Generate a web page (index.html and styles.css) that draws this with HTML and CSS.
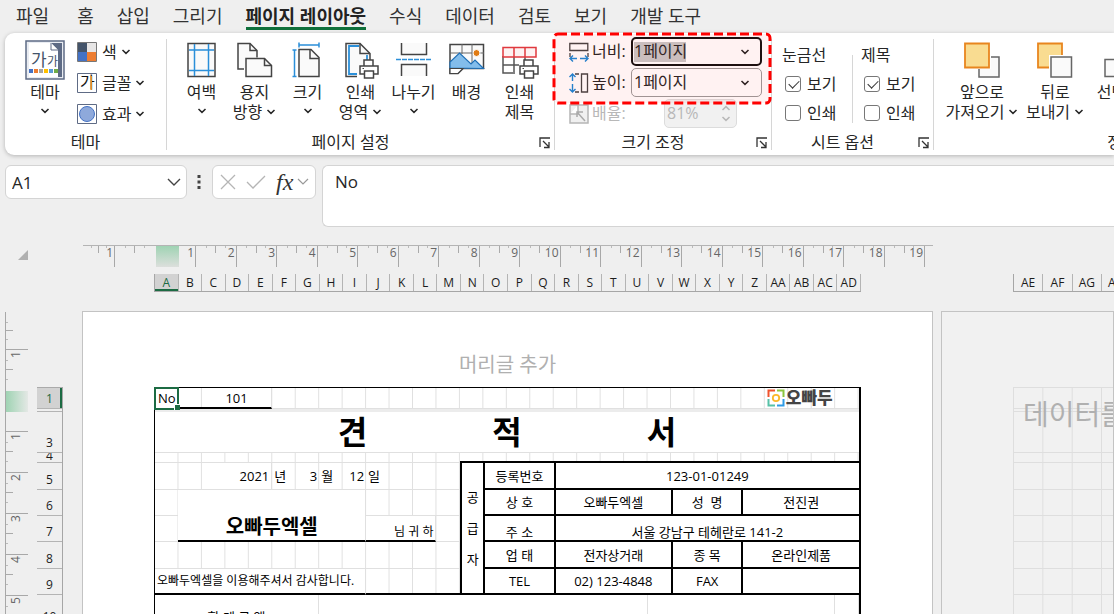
FILE: index.html
```html
<!DOCTYPE html>
<html lang="ko">
<head>
<meta charset="utf-8">
<title>견적서</title>
<link rel="stylesheet" href="styles.css">
</head>
<body>
<svg class="defs" aria-hidden="true">
  <symbol id="chev" viewBox="0 0 10 6"><path d="M1.500 1l3.500 3.400L8.500 1" fill="none" stroke="currentColor" stroke-width="1.500"/></symbol>
  <symbol id="launch" viewBox="0 0 12 12"><path d="M1 10V1h10M4 4l6 6M10 5v5.500H5" fill="none" stroke="#333" stroke-width="1.300"/></symbol>
  <symbol id="printer" viewBox="0 0 20 20"><path d="M5 7V1h9v6M5 15H1V7h18v8h-4" fill="#fff" stroke="#444" stroke-width="1.500"/><path d="M5.500 12h9v7h-9z" fill="#fff" stroke="#444" stroke-width="1.500"/><path d="M3.500 9.500h1.500" stroke="#444"/></symbol>
</svg>

<nav class="tabs">
  <button class="tab">파일</button>
  <button class="tab">홈</button>
  <button class="tab">삽입</button>
  <button class="tab">그리기</button>
  <button class="tab active">페이지 레이아웃</button>
  <button class="tab">수식</button>
  <button class="tab">데이터</button>
  <button class="tab">검토</button>
  <button class="tab">보기</button>
  <button class="tab">개발 도구</button>
</nav>

<section class="ribbon">
  <div class="group g-theme">
    <div class="tools">
      <button class="big theme">
        <svg class="ico" width="40" height="40" viewBox="0 0 40 40"><rect x="1" y="1" width="38" height="38" fill="#e9ecf2" stroke="#5e6b85" stroke-width="1.500"/><rect x="4" y="3" width="29" height="34" fill="#fff"/><path d="M26 3h11v34h-4V10z" fill="#5e6b85"/><path d="M26 3v7h7" fill="#fff" stroke="#5e6b85"/><text x="6" y="26" font-size="17" fill="#44546a">가</text><text x="22" y="26" font-size="12" fill="#44546a">가</text><path d="M4 29h4v4H4z" fill="#4472c4"/><path d="M9 29h4v4H9z" fill="#ed7d31"/><path d="M14 29h4v4h-4z" fill="#a5a5a5"/><path d="M19 29h4v4h-4z" fill="#ffc000"/><path d="M24 29h4v4h-4z" fill="#5b9bd5"/><path d="M29 29h4v4h-4z" fill="#70ad47"/></svg>
        <span>테마</span><svg class="chev"><use href="#chev"/></svg>
      </button>
      <div class="stack">
        <button class="small"><svg width="20" height="20"><path d="M1 1h9v9H1z" fill="#44546a"/><path d="M10 1h9v9h-9z" fill="#e7e6e6"/><path d="M1 10h9v9H1z" fill="#4472c4"/><path d="M10 10h9v9h-9z" fill="#ed7d31"/><path d="M.5.5h19v19H.5z" fill="none" stroke="#777"/></svg><span>색</span><svg class="chev"><use href="#chev"/></svg></button>
        <button class="small"><svg width="20" height="20"><path d="M.5.5h19v19H.5z" fill="#fff" stroke="#5e6b85"/><text x="3" y="15" font-size="16" fill="#111">가</text><path d="M14.500 3v14" stroke="#e08a2a"/></svg><span>글꼴</span><svg class="chev"><use href="#chev"/></svg></button>
        <button class="small"><svg width="20" height="20"><path d="M.5.5h19v19H.5z" fill="#fff" stroke="#5e6b85"/><circle cx="10" cy="10" r="7.500" fill="#8ea9db" stroke="#4472c4"/></svg><span>효과</span><svg class="chev"><use href="#chev"/></svg></button>
      </div>
    </div>
    <div class="caption"><span>테마</span></div>
  </div>

  <div class="group g-setup">
    <div class="tools">
      <button class="big"><svg class="ico" width="36" height="40" viewBox="0 0 36 40"><path d="M4 3.500h27v33H4z" fill="#fafafa" stroke="#444" stroke-width="1.500"/><path d="M10.500 4v32M24.500 4v32M5 10h25M5 30.500h25" stroke="#2b8fd9" stroke-width="1.500"/></svg><span>여백</span><svg class="chev"><use href="#chev"/></svg></button>
      <button class="big"><svg class="ico" width="36" height="40" viewBox="0 0 36 40"><path d="M7 29H1V3.500h12l7 7v7" fill="#fafafa" stroke="#444" stroke-width="1.500"/><path d="M13 3.500v7h7" fill="none" stroke="#444" stroke-width="1.500"/><path d="M9 18.500h18.500l7 7v11H9z" fill="#fafafa" stroke="#444" stroke-width="1.500"/><path d="M27.500 18.500v7h7" fill="none" stroke="#444" stroke-width="1.500"/></svg><span>용지</span><span class="row">방향 <svg class="chev"><use href="#chev"/></svg></span></button>
      <button class="big"><svg class="ico" width="36" height="40" viewBox="0 0 36 40"><path d="M9 9.500h12l8 8v19H9z" fill="#fafafa" stroke="#444" stroke-width="1.500"/><path d="M20 9.500v9h9" fill="none" stroke="#444" stroke-width="1.500"/><path d="M9 5h20M9 2.500v5M29 2.500v5M4.500 10v26.500M2.500 10h4M2.500 36.500h4" stroke="#2b8fd9" stroke-width="1.500"/></svg><span>크기</span><svg class="chev"><use href="#chev"/></svg></button>
      <button class="big"><svg class="ico" width="36" height="40" viewBox="0 0 36 40"><path d="M14 36.500H3V3.500h14l10 10v8" fill="#fafafa" stroke="#444" stroke-width="1.500"/><path d="M14 34H6V6h10M24 15v6" fill="none" stroke="#2b8fd9" stroke-width="1.800"/><path d="M17 3.500v10h10" fill="none" stroke="#444" stroke-width="1.500"/><use href="#printer" x="16" y="19" width="20" height="20"/></svg><span>인쇄</span><span class="row">영역 <svg class="chev"><use href="#chev"/></svg></span></button>
      <button class="big"><svg class="ico" width="36" height="40" viewBox="0 0 36 40"><path d="M5.500 3v11.500h25V3M5.500 36V24.500h25V36" fill="#fafafa" stroke="#444" stroke-width="1.500"/><path d="M0 19.500h36" stroke="#2b8fd9" stroke-width="1.500" stroke-dasharray="5 1"/></svg><span>나누기</span><svg class="chev"><use href="#chev"/></svg></button>
      <button class="big"><svg class="ico" width="36" height="40" viewBox="0 0 36 40"><path d="M1 4.500h33.500v24H14l-5 5H1z" fill="#fafafa" stroke="#444" stroke-width="1.500"/><path d="M13 4v10M23 4v20M1 13h34" stroke="#666"/><path d="M1 28V22l9.500-9L22 24l4-4 8.500 8.500z" fill="#83bdeb" stroke="#1f6fb5" stroke-width="1.200"/><circle cx="27.500" cy="13" r="3.500" fill="#e07b12" stroke="#fff"/><path d="M1 33.500v-5h13l-5 5z" fill="#fff" stroke="#444" stroke-width="1.200"/></svg><span>배경</span></button>
      <button class="big"><svg class="ico" width="38" height="40" viewBox="0 0 38 40"><path d="M2 16v17h12M2 25h16M13 16v16M24 16v4" fill="none" stroke="#555" stroke-width="1.500"/><path d="M2 7.500h33V17H2zM13 7.500V17M24 7.500V17" fill="#fdf2f2" stroke="#e0393e" stroke-width="1.500"/><use href="#printer" x="18" y="19" width="20" height="20"/></svg><span>인쇄</span><span>제목</span></button>
    </div>
    <div class="caption"><span>페이지 설정</span><button class="launch" aria-label="페이지 설정 옵션"><svg width="12" height="12"><use href="#launch"/></svg></button></div>
  </div>

  <div class="group g-scale">
    <div class="fields">
      <div class="field">
        <svg width="20" height="20"><path d="M.800 1.500h18v7h-18zM1 11v4M19 11v4" fill="none" stroke="#444" stroke-width="1.300"/><path d="M1 16.500h7M11 16.500h8M4 13.500l-3 3 3 3M16 13.500l3 3-3 3" fill="none" stroke="#1b87d6" stroke-width="1.400"/></svg>
        <label for="w">너비:</label>
        <span class="combo"><select id="w" class="focused"><option>1페이지</option></select><svg class="chev"><use href="#chev"/></svg></span>
      </div>
      <div class="field">
        <svg width="20" height="20"><path d="M12.500 1h6v18h-6zM6 1h4M6 19h4" fill="none" stroke="#444" stroke-width="1.300"/><path d="M3.500 1v7M3.500 11v8M.500 4l3-3 3 3M.500 16l3 3 3-3" fill="none" stroke="#1b87d6" stroke-width="1.400"/></svg>
        <label for="h">높이:</label>
        <span class="combo"><select id="h"><option>1페이지</option></select><svg class="chev"><use href="#chev"/></svg></span>
      </div>
      <div class="field off">
        <svg width="20" height="20"><path d="M1 1h18v18H1zM1 10h8V1" fill="#f0f0f0" stroke="#b5b5b5" stroke-width="1.500"/><path d="M16 17L8 8M8 13V8h6" fill="none" stroke="#aaa" stroke-width="1.500"/></svg>
        <label for="z">배율:</label>
        <span class="spin"><input id="z" type="text" value="81%" disabled><span class="arrows"><svg class="chev up"><use href="#chev"/></svg><svg class="chev"><use href="#chev"/></svg></span></span>
      </div>
    </div>
    <div class="caption"><span>크기 조정</span><button class="launch" aria-label="크기 조정 옵션"><svg width="12" height="12"><use href="#launch"/></svg></button></div>
    <svg class="mark"><rect x="2" y="2" rx="4" /></svg>
  </div>

  <div class="group g-opts">
    <div class="checks">
      <fieldset><legend>눈금선</legend><label><input type="checkbox" checked>보기</label><label><input type="checkbox">인쇄</label></fieldset>
      <fieldset><legend>제목</legend><label><input type="checkbox" checked>보기</label><label><input type="checkbox">인쇄</label></fieldset>
    </div>
    <div class="caption"><span>시트 옵션</span><button class="launch" aria-label="시트 옵션 더 보기"><svg width="12" height="12"><use href="#launch"/></svg></button></div>
  </div>

  <div class="group g-arrange">
    <div class="tools">
      <button class="big"><svg class="ico" width="36" height="40" viewBox="0 0 36 40"><path d="M15 17h20v20H15z" fill="#fafafa" stroke="#666" stroke-width="1.500"/><path d="M0 2h27v27H0z" fill="#fff"/><path d="M1 3.500h24v24H1z" fill="#f9dc91" stroke="#e8851e" stroke-width="1.800"/></svg><span>앞으로</span><span class="row">가져오기 <svg class="chev"><use href="#chev"/></svg></span></button>
      <button class="big"><svg class="ico" width="36" height="40" viewBox="0 0 36 40"><path d="M1 3.500h24v24H1z" fill="#f9dc91" stroke="#e8851e" stroke-width="1.800"/><path d="M12 15h24v24H12z" fill="#fff"/><path d="M14 17h20.500v20H14z" fill="#fafafa" stroke="#666" stroke-width="1.500"/></svg><span>뒤로</span><span class="row">보내기 <svg class="chev"><use href="#chev"/></svg></span></button>
      <button class="big"><svg class="ico" width="36" height="40" viewBox="0 0 36 40"><path d="M15 3.500h18v18H15z" fill="#f9dc91" stroke="#e8851e" stroke-width="1.800"/><path d="M2 19.500h18v17H2z" fill="#fafafa" stroke="#666" stroke-width="1.500"/></svg><span>선택 창</span></button>
    </div>
    <div class="caption"><span>정렬</span></div>
  </div>
</section>

<section class="formula">
  <div class="box namebox"><input type="text" value="A1" aria-label="이름 상자"><svg width="14" height="9"><path d="M1 1l6 6 6-6" fill="none" stroke="#444" stroke-width="1.400"/></svg></div>
  <svg class="dots" width="4" height="16"><path d="M.500 1h3v3h-3zM.500 6.500h3v3h-3zM.500 12h3v3h-3z" fill="#444"/></svg>
  <div class="box fxbox">
    <button aria-label="취소"><svg width="16" height="16"><path d="M1 1l14 14M15 1L1 15" stroke="#b5b5b5" stroke-width="1.300"/></svg></button>
    <button aria-label="입력"><svg width="20" height="16"><path d="M1 8l6 6L19 2" fill="none" stroke="#b5b5b5" stroke-width="1.300"/></svg></button>
    <button class="fx">fx</button>
    <svg width="12" height="8"><path d="M1 1l5 5 5-5" fill="none" stroke="#999" stroke-width="1.200"/></svg>
  </div>
  <textarea class="box" aria-label="수식 입력줄">No</textarea>
</section>

<main class="workspace">
  <div class="corner"><svg width="10" height="10"><path d="M10 0v10H0z" fill="#b0b0b0"/></svg></div>
  <div class="hruler">
    <i>1</i><i></i><i class="sel">1</i><i>2</i><i>3</i><i>4</i><i>5</i><i>6</i><i>7</i><i>8</i><i>9</i><i>10</i><i>11</i><i>12</i><i>13</i><i>14</i><i>15</i><i>16</i><i>17</i><i>18</i><i>19</i>
  </div>
  <div class="cols main">
    <b class="on">A</b><b>B</b><b>C</b><b>D</b><b>E</b><b>F</b><b>G</b><b>H</b><b>I</b><b>J</b><b>K</b><b>L</b><b>M</b><b>N</b><b>O</b><b>P</b><b>Q</b><b>R</b><b>S</b><b>T</b><b>U</b><b>V</b><b>W</b><b>X</b><b>Y</b><b>Z</b><b>AA</b><b>AB</b><b>AC</b><b>AD</b>
  </div>
  <div class="cols next"><b>AE</b><b>AF</b><b>AG</b><b>AH</b><b>AI</b><b>AJ</b></div>

  <div class="vruler"><i></i><i>1</i><i class="sel"></i><i>1</i><i>2</i><i>3</i><i>4</i><i>5</i></div>
  <div class="rows">
    <b class="r1 on">1</b><b class="r2"></b><b class="r3">3</b><b class="r4">4</b><b class="r5">5</b><b class="r6">6</b><b class="r7">7</b><b class="r8">8</b><b class="r9">9</b><b class="r10">10</b>
  </div>

  <article class="paper">
    <header>머리글 추가</header>
    <table>
      <colgroup><col span="30"></colgroup>
      <tr class="r1"><td class="active-cell">No</td><td class="line"></td><td class="m line" colspan="3">101</td><td colspan="21"></td>
        <td colspan="4"><span class="brand"><svg width="18" height="18"><path d="M1.500 8V1.500H8" fill="none" stroke="#f0532d" stroke-width="2"/><path d="M10 1.500h6.500V8" fill="none" stroke="#8cc63f" stroke-width="2"/><path d="M1.500 10v6.500H8" fill="none" stroke="#56c1a7" stroke-width="2"/><path d="M10 16.500h6.500V10" fill="none" stroke="#2e9be6" stroke-width="2"/><circle cx="9" cy="9" r="3.200" fill="none" stroke="#fbb829" stroke-width="1.800"/></svg>오빠두</span></td></tr>
      <tr class="r2"><td class="band" colspan="30"></td></tr>
      <tr class="r3"><td class="m" colspan="30"><h1><span>견</span> <span>적</span> <span>서</span></h1></td></tr>
      <tr class="r4"><td colspan="13"></td><td class="line" colspan="17"></td></tr>
      <tr class="r5"><td></td><td></td><td class="m right" colspan="3">2021</td><td class="left">년</td><td class="right">3</td><td class="left">월</td><td class="right">12</td><td class="left">일</td><td colspan="3"></td>
        <td class="m box-l line" rowspan="5"><div class="vert"><span>공</span><span>급</span><span>자</span></div></td><td class="m k" colspan="3">등록번호</td><td class="m k" colspan="13">123-01-01249</td></tr>
      <tr class="r6"><td></td><td class="m client" colspan="8" rowspan="2">오빠두엑셀</td><td colspan="4"></td>
        <td class="m k" colspan="3">상 호</td><td class="m k" colspan="5">오빠두엑셀</td><td class="m k" colspan="3">성&nbsp; 명</td><td class="m k" colspan="5">전진권</td></tr>
      <tr class="r7"><td></td><td class="m right low line small-text" colspan="3">님 귀 하</td><td></td>
        <td class="m k low" colspan="3">주 소</td><td class="m k low" colspan="13">서울 강남구 테헤란로 141-2</td></tr>
      <tr class="r8"><td colspan="13"></td>
        <td class="m k" colspan="3">업 태</td><td class="m k" colspan="5">전자상거래</td><td class="m k" colspan="3">종 목</td><td class="m k" colspan="5">온라인제품</td></tr>
      <tr class="r9"><td class="m left line small-text" colspan="9">오빠두엑셀을 이용해주셔서 감사합니다.</td><td class="line" colspan="4"></td>
        <td class="m k" colspan="3">TEL</td><td class="m k" colspan="5">02) 123-4848</td><td class="m k" colspan="3">FAX</td><td class="m k" colspan="5"></td></tr>
      <tr class="r10"><td class="m" colspan="7">합 계 금 액</td><td class="m" colspan="14"></td><td class="m" colspan="8"></td><td class="m"></td></tr>
    </table>
  </article>

  <article class="paper blank">
    <div class="blank-grid">
      <div class="r1"></div><div class="r2"></div><div class="r3"></div><div class="r4"></div><div class="r5"></div><div class="r6"></div><div class="r7"></div><div class="r8"></div><div class="r9"></div><div class="r10"></div>
      <p>데이터를 추가하려면 클릭</p>
    </div>
  </article>
</main>
</body>
</html>
```

FILE: styles.css
```css
* { box-sizing: border-box; }

body {
  margin: 0;
  height: 100vh;
  overflow: hidden;
  display: flex;
  flex-direction: column;
  background: #efefef;
  color: #262626;
  font-family: "Open Sans", "Noto Sans CJK KR", sans-serif;
  font-size: 16px;
}

button, input, select, textarea { font: inherit; color: inherit; }
button { border: 0; background: none; padding: 0; }
svg { flex: none; display: block; }
.defs { position: absolute; width: 0; height: 0; }
.chev { width: 10px; height: 6px; }

/* tabs */
.tabs { display: flex; gap: 23px; height: 33px; padding-left: 16px; flex: none; }
.tab { height: 30px; line-height: 32px; font-size: 18px; white-space: nowrap; color: #333; }
.tab:first-child { margin-right: 5px; }
.tab.active { font-weight: 700; border-bottom: 3px solid #0f703b; color: #222; }

/* ribbon */
.ribbon {
  flex: none;
  display: flex;
  height: 122px;
  margin-left: 5px;
  padding: 6px 0 5px;
  background: #fff;
  border-radius: 9px 0 0 9px;
  box-shadow: 0 1px 4px rgba(0, 0, 0, .25);
  line-height: 19px;
}
.group { flex: none; display: flex; flex-direction: column; justify-content: space-between; border-right: 1px solid #d6d6d6; position: relative; }
.g-theme { width: 162px; }
.g-setup { width: 388px; }
.g-scale { width: 217px; }
.g-opts { width: 162px; }
.g-arrange { width: 376px; border: 0; }
.tools { display: flex; }
.g-theme .tools { padding-left: 20px; gap: 12px; }
.g-setup .tools { padding-left: 8px; }
.g-arrange .tools { padding-left: 9px; gap: 2px; }
.big { display: flex; flex-direction: column; align-items: center; width: 53px; white-space: nowrap; line-height: 20px; }
.big > .ico { margin: 1px 0 2px; }
.big > .chev { margin-top: 6px; }
.big.theme { width: 40px; }
.g-arrange .big { width: 78px; }
.g-arrange .big + .big { width: 64px; }
.row { display: flex; align-items: center; gap: 4px; }
.stack { display: flex; flex-direction: column; gap: 11px; padding-top: 3px; }
.small { display: flex; align-items: center; gap: 5px; height: 20px; }
.small .chev { margin-left: -1px; }
.caption { display: flex; justify-content: center; height: 16px; line-height: 16px; position: relative; }
.g-setup .caption, .g-scale .caption, .g-opts .caption { padding-right: 20px; }
.launch { position: absolute; right: 3px; top: 3px; }

.fields { display: flex; flex-direction: column; gap: 2px; margin-top: -2px; padding-left: 14px; }
.field { display: flex; align-items: center; height: 29px; }
.field label { width: 42px; padding-left: 3px; white-space: nowrap; }
.off { color: #b8b8b8; }
.combo { position: relative; width: 131px; height: 29px; }
.combo select {
  appearance: none;
  width: 100%;
  height: 29px;
  padding: 0 2px;
  border: 1px solid #9b9b9b;
  border-radius: 5px;
  background: #fff;
}
.combo select.focused {
  padding: 0 1px;
  border: 2px solid #111;
  background: linear-gradient(#c9c9c9, #c9c9c9) 1px center / 52px 20px no-repeat, #fff;
}
.combo .chev { position: absolute; right: 12px; top: 12px; pointer-events: none; }
.spin { display: flex; width: 73px; height: 29px; margin-left: 33px; border: 1px solid #dcdcdc; border-radius: 5px; background: #f1f1f1; }
.spin input { width: 52px; padding: 0 2px; border: 0; background: none; color: #b8b8b8; }
.arrows { display: flex; flex-direction: column; justify-content: space-between; padding: 5px 4px; }
.up { transform: rotate(180deg); }
.mark { position: absolute; left: -3px; top: -7px; width: 220px; height: 73px; pointer-events: none; }
.mark rect { width: calc(100% - 4px); height: calc(100% - 4px); fill: rgba(255, 0, 0, .05); stroke: #f00; stroke-width: 3; stroke-dasharray: 9 4; }

.checks { display: flex; padding: 6px 0 0 10px; }
fieldset { border: 0; margin: 0; padding: 0; width: 70px; min-width: 0; }
fieldset + fieldset { border-left: 1px solid #d6d6d6; padding-left: 8px; width: 79px; }
legend { padding: 0; line-height: 20px; }
.checks label { display: flex; align-items: center; gap: 6px; height: 20px; margin: 9px 0 0 3px; white-space: nowrap; }
.checks input {
  appearance: none;
  flex: none;
  width: 16px;
  height: 16px;
  margin: 0;
  border: 1px solid #777;
  border-radius: 3px;
  background: #fff;
}
.checks input:checked::after { content: ""; display: block; width: 9px; height: 5px; margin: 3px 0 0 3px; border: solid #333; border-width: 0 0 1px 1px; transform: rotate(-45deg); }

/* formula bar */
.formula { flex: none; display: flex; align-items: flex-start; height: 80px; padding: 0 0 0 5px; margin-top: 10px; }
.box { border: 1px solid #d4d4d4; border-radius: 6px; background: #fff; }
.namebox { display: flex; align-items: center; width: 182px; height: 34px; padding: 0 5px 0 6px; }
.namebox input { flex: 1; min-width: 0; padding: 0; border: 0; font-size: 17px; background: none; }
.dots { margin: 9px 11px 0 10px; }
.fxbox { display: flex; align-items: center; gap: 10px; width: 104px; height: 34px; padding: 0 2px 0 7px; }
.fxbox .fx { font: italic 400 24px/24px "Liberation Serif", serif; color: #333; }
.fxbox > svg { margin-left: -6px; }
textarea.box { flex: 1; min-width: 0; height: 62px; margin: 0 0 0 6px; padding: 4px 12px; border-right: 0; border-radius: 6px 0 0 6px; font-size: 17px; line-height: 24px; resize: none; overflow: hidden; }

/* workspace */
.workspace {
  flex: 1;
  min-height: 0;
  display: grid;
  grid-template-columns: 32px 45px 859px minmax(0, 1fr);
  grid-template-rows: 29px 37px 1fr;
  padding-left: 5px;
  overflow: hidden;
}
.workspace b, .workspace i { font-weight: 400; font-style: normal; }
.corner { padding: 5px 0 0 13px; }
.hruler {
  grid-column: 3;
  display: grid;
  grid-template-columns: 32px repeat(20, 1fr) 8px;
  height: 22px;
  margin: 0 8px 0 1px;
  border-top: 1px solid #b4b4b4;
  color: #666;
  font-size: 12px;
  line-height: 14px;
}
.hruler i {
  border-right: 1px solid #a8a8a8;
  padding-right: 1px;
  text-align: right;
  background:
    linear-gradient(#aaa, #aaa) 50% 0 / 1px 7px no-repeat,
    linear-gradient(#bbb, #bbb) 25% 0 / 1px 2px no-repeat,
    linear-gradient(#bbb, #bbb) 75% 0 / 1px 2px no-repeat;
}
.hruler i:nth-child(2) { border-color: transparent; }
.hruler .sel { background: linear-gradient(#9fd3b3, #dcdfdc) 0 0 / 23px 100% no-repeat; }
.cols { display: grid; height: 18px; border-bottom: 1px solid #a6a6a6; border-left: 1px solid #a6a6a6; font-size: 12px; line-height: 17px; text-align: center; color: #1c1c1c; }
.cols b { border-right: 1px solid #b4b4b4; min-width: 0; }
.cols.main { grid-column: 3; grid-row: 2; margin-left: 72px; width: 707px; grid-template-columns: repeat(30, minmax(0, 1fr)); }
.cols.next { grid-column: 4; grid-row: 2; margin-left: 72px; width: 177px; grid-template-columns: repeat(6, minmax(0, 1fr)); }
.cols .on { background: #d2d2d2; color: #1c6b43; box-shadow: inset 0 -2px #1c6b43; }

.vruler { grid-column: 1; grid-row: 3; width: 23px; margin-top: 1px; border-left: 1px solid #a8a8a8; color: #666; font-size: 12px; }
/* each cell is turned half round so that its number reads from bottom to top */
.vruler i {
  display: block;
  width: 22px;
  height: 41px;
  padding: 0 3px 1px 0;
  border-bottom: 1px solid #a8a8a8;
  writing-mode: vertical-rl;
  text-align: end;
  line-height: 14px;
  transform: rotate(180deg);
  background:
    linear-gradient(#aaa, #aaa) 100% 50% / 7px 1px no-repeat,
    linear-gradient(#bbb, #bbb) 100% 25% / 2px 1px no-repeat,
    linear-gradient(#bbb, #bbb) 100% 75% / 2px 1px no-repeat;
}
.vruler i:first-child { height: 37px; border-color: transparent; }
.vruler .sel { border-color: transparent; background: linear-gradient(to left, #9fd3b3, #e4e8e5) 0 100% / 100% 21px no-repeat; }
.rows { grid-column: 2; grid-row: 3; width: 26px; margin-top: 76px; border-right: 1px solid #a6a6a6; font-size: 12px; color: #1c1c1c; }
.rows b { display: flex; align-items: flex-end; justify-content: center; overflow: hidden; border-bottom: 1px solid #b4b4b4; line-height: 18px; }
.rows .on { background: #d2d2d2; color: #1c6b43; border-top: 1px solid #aaa; box-shadow: inset -2px 0 #1c6b43; }

.r1 { height: 21px; }
.r2 { height: 3px; }
.r3 { height: 41px; }
.r4 { height: 10px; }
.r5, .r8 { height: 27px; }
.r6, .r7, .r9 { height: 26px; }
.r10 { height: 44px; }
.rows .r1 { height: 22px; }
.rows .r4 { line-height: 12px; }
.rows .r10 { align-items: center; }

.paper { grid-column: 3; grid-row: 3; margin-right: 8px; padding-left: 71px; background: #fff; border: 1px solid #c3c3c3; border-bottom: 0; overflow: hidden; }
.paper header { width: 707px; height: 75px; padding-top: 40px; text-align: center; font-size: 20px; line-height: 26px; color: #b0b0b0; }

table {
  width: 707px;
  table-layout: fixed;
  border-collapse: separate;
  border-spacing: 0;
  border: solid #000;
  border-width: 1px 2px 0 1px;
  background: linear-gradient(to right, transparent calc(100% - 1px), #e0e0e0 0) 0 0 / calc(100% / 30) 100%;
  font-size: 13px;
  line-height: 16px;
  color: #000;
}
td { padding: 0; text-align: center; vertical-align: middle; white-space: nowrap; border-bottom: 1px solid #e0e0e0; }
td.m { background: #fff; border-right: 1px solid #e0e0e0; }
td.band { background: #ececec; border: 0; }
td.line { border-bottom: 2px solid #000; }
td.k { border-bottom: 2px solid #000; border-left: 2px solid #000; border-right: 0; }
.r3 td.m { border-right: 0; }
td.box-l { border-left: 2px solid #000; border-right: 0; }
td.right { text-align: right; padding-right: 2px; }
td.left { text-align: left; padding-left: 2px; }
td.low { vertical-align: bottom; }
td.small-text { font-size: 12px; }
td.client { vertical-align: bottom; border-bottom: 2px solid #000; font-size: 20px; font-weight: 700; line-height: 26px; }
td.active-cell { background: #fff; outline: 2px solid #1c6b43; outline-offset: -1px; position: relative; }
td.active-cell::after { content: ""; position: absolute; right: -2px; bottom: -2px; width: 5px; height: 5px; background: #1c6b43; border: solid #fff; border-width: 1px 0 0 1px; }
h1 { display: flex; justify-content: center; gap: 125px; margin: 0; font-size: 32px; line-height: 38px; }
.vert { display: flex; flex-direction: column; gap: 15px; }
.brand { display: flex; align-items: center; gap: 1px; width: 72px; height: 19px; padding-left: 2px; font-size: 17px; line-height: 20px; font-weight: 900; color: #444; }

.paper.blank { grid-column: 4; margin: 0; background: #f1f1f1; }
.blank-grid { position: relative; width: 177px; margin-top: 75px; border: solid #dedede; border-width: 1px 0 0 1px; background: linear-gradient(to right, transparent calc(100% - 1px), #dedede 0) 0 0 / calc(100% / 6) 100%; }
.blank-grid div { border-bottom: 1px solid #dedede; }
.blank-grid p { position: absolute; left: 9px; top: 8px; margin: 0; font-size: 28px; line-height: 36px; white-space: nowrap; color: #b0b0b0; }
```
